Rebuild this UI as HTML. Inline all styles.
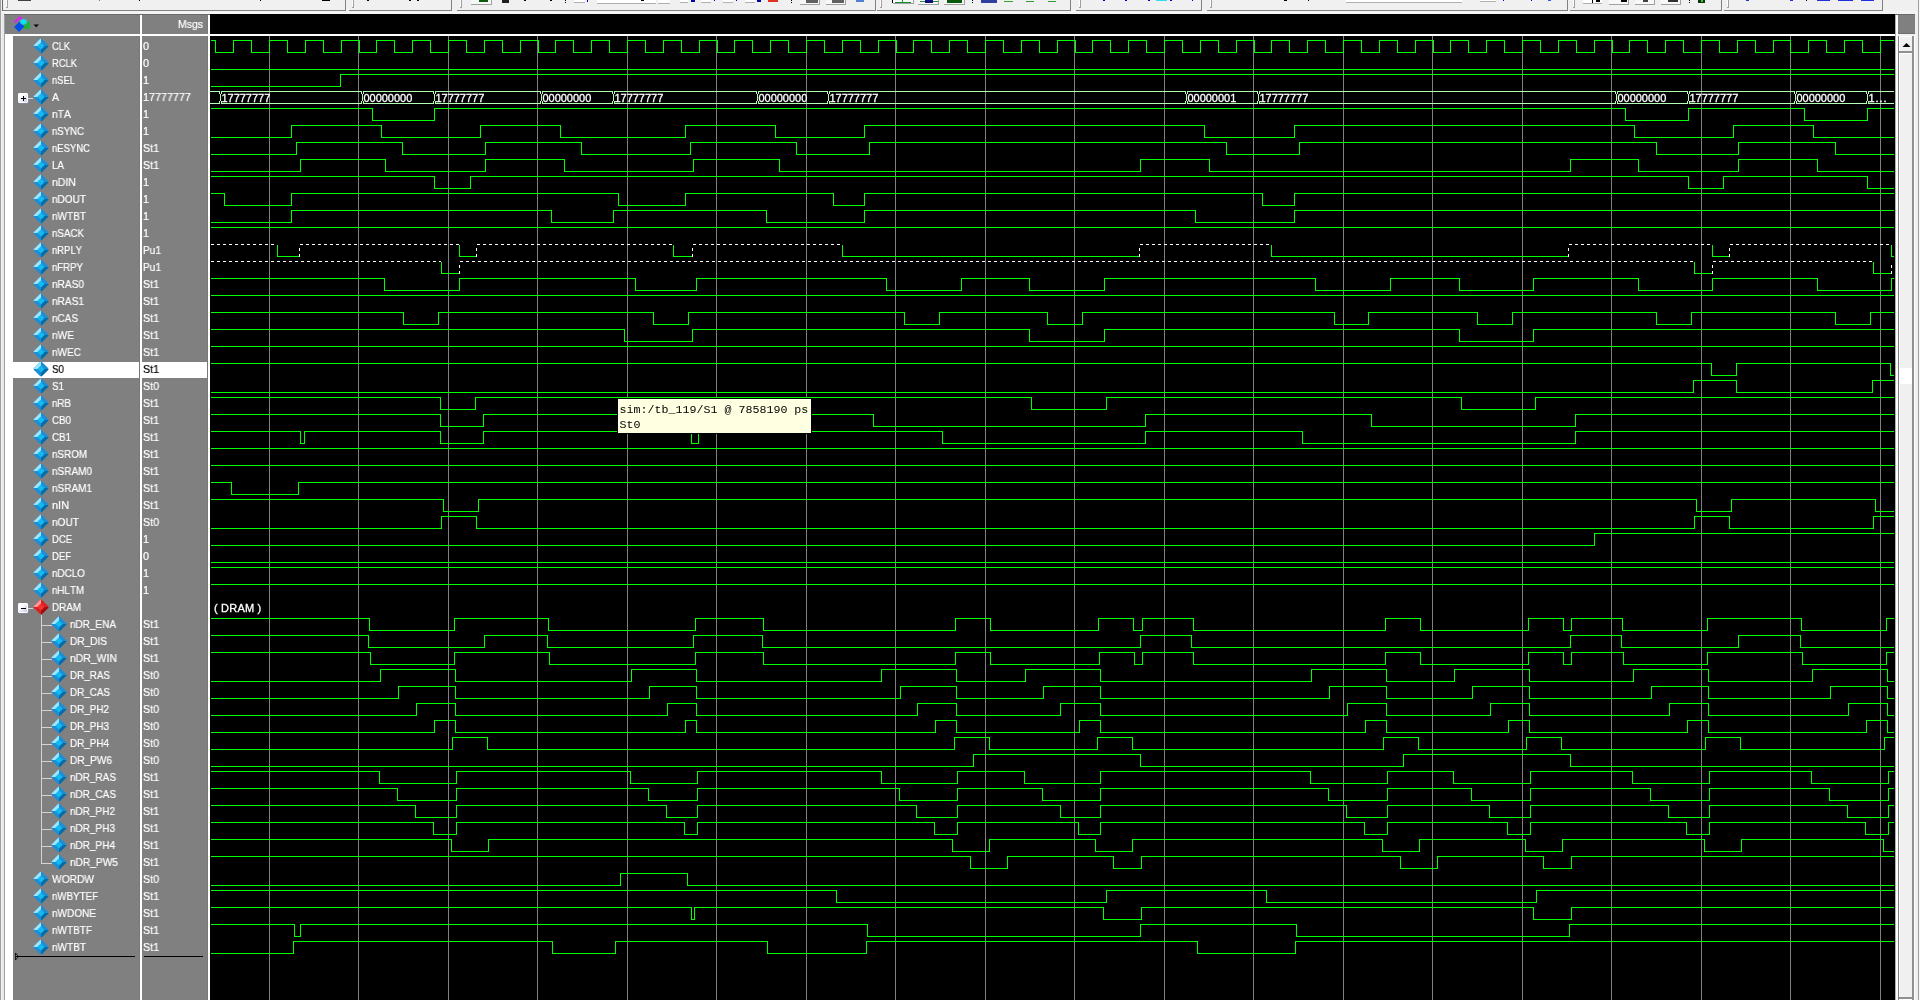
<!DOCTYPE html>
<html><head><meta charset="utf-8"><title>wave</title>
<style>
html,body{margin:0;padding:0}
body{width:1920px;height:1000px;overflow:hidden;position:relative;background:#f0f0f0;font-family:"Liberation Sans",sans-serif;font-size:11px;font-kerning:none}
i,b{display:block;position:absolute;font-style:normal;font-weight:normal}
.abs{position:absolute}
.wave{position:absolute;left:0;top:0;will-change:transform}
.bt{font-family:"Liberation Sans",sans-serif;font-size:11px;fill:#fff;stroke:#fff;stroke-width:.3px}
.nm,.vl{-webkit-text-stroke:.2px;will-change:transform;position:absolute;height:17px;line-height:17px;color:#fff;white-space:nowrap;transform-origin:0 50%;}
.nm{transform:scaleX(0.92)}
.vl{left:143px;transform:scaleX(0.97)}
.nm.sel,.vl.sel{color:#000}
.dm{position:absolute}
.selbg{position:absolute;left:13px;width:126px;height:16px;background:#fff}
.selbg2{position:absolute;left:142px;width:65px;height:16px;background:#fff}
.cl{height:1px;background:#d4d4d4}
.cv{width:1px;background:#d4d4d4}
.pm{width:8px;height:8px;border:1px solid #fff;border-radius:1px;background:linear-gradient(135deg,#ffffff 30%,#c4cce8 100%);box-shadow:0.5px 0.5px 0 #8890b0}
.pm .h{left:1.7px;top:3.5px;width:5px;height:1px;background:#000}
.pm .v{left:3.7px;top:1.5px;width:1px;height:5px;background:#000}
.tip{will-change:transform;position:absolute;left:617px;top:398px;width:193px;height:34px;border:1px solid #000;background:#ffffe1;font-family:"Liberation Mono",monospace;font-size:11.67px;color:#000;line-height:15px;white-space:pre;padding:0;overflow:hidden}
.tip span{position:absolute;left:1.5px}
</style></head><body>


<!-- top toolbar strip -->
<div id="tb">
<i style="left:1661px;top:0;width:19px;height:4px;background:#f8f8f8;border-right:1px solid #a0a0a0;border-bottom:1px solid #a0a0a0"></i>
<i style="left:1635px;top:0;width:19px;height:4px;background:#f8f8f8;border-right:1px solid #a0a0a0;border-bottom:1px solid #a0a0a0"></i>
<i style="left:1609px;top:0;width:19px;height:4px;background:#f8f8f8;border-right:1px solid #a0a0a0;border-bottom:1px solid #a0a0a0"></i>
<i style="left:944px;top:0;width:20px;height:4px;background:#f8f8f8;border-right:1px solid #a0a0a0;border-bottom:1px solid #a0a0a0"></i>
<i style="left:918px;top:0;width:20px;height:4px;background:#f8f8f8;border-right:1px solid #a0a0a0;border-bottom:1px solid #a0a0a0"></i>
<i style="left:893px;top:0;width:20px;height:3px;background:#f8f8f8;border-right:1px solid #a0a0a0;border-bottom:1px solid #a0a0a0"></i>
<i style="left:826px;top:0;width:19px;height:4px;background:#f8f8f8;border-right:1px solid #a0a0a0;border-bottom:1px solid #a0a0a0"></i>
<i style="left:800px;top:0;width:19px;height:4px;background:#f8f8f8;border-right:1px solid #a0a0a0;border-bottom:1px solid #a0a0a0"></i>
<i style="left:471px;top:0;width:20px;height:4px;background:#f8f8f8;border-right:1px solid #a0a0a0;border-bottom:1px solid #a0a0a0"></i>
<i style="left:1480px;top:0;width:16px;height:1px;background:#fff;border-bottom:1px solid #b0b0b0"></i>
<i style="left:1346px;top:0;width:116px;height:2px;background:#fff;border-bottom:1px solid #b0b0b0"></i>
<i style="left:1583px;top:0;width:19px;height:3px;background:#fff;border-bottom:1px solid #b0b0b0"></i>
<i style="left:745px;top:0;width:10px;height:2px;background:#fff;border-bottom:1px solid #b0b0b0"></i>
<i style="left:723px;top:0;width:10px;height:2px;background:#fff;border-bottom:1px solid #b0b0b0"></i>
<i style="left:701px;top:0;width:10px;height:2px;background:#fff;border-bottom:1px solid #b0b0b0"></i>
<i style="left:680px;top:0;width:8px;height:2px;background:#fff;border-bottom:1px solid #b0b0b0"></i>
<i style="left:658px;top:0;width:12px;height:3px;background:#fff;border-bottom:1px solid #b0b0b0"></i>
<i style="left:574px;top:0;width:11px;height:2px;background:#fff;border-bottom:1px solid #b0b0b0"></i>
<i style="left:597px;top:0;width:59px;height:3px;background:#fff;border-bottom:1px solid #b0b0b0"></i>
<i style="left:3px;top:0;width:343px;height:11px;border-right:1px solid #808080;border-bottom:1px solid #808080;box-sizing:border-box"></i>
<i style="left:6px;top:0;width:1px;height:8px;background:#fff"></i><i style="left:7px;top:0;width:1px;height:8px;background:#a0a0a0"></i><i style="left:6px;top:7px;width:2px;height:1px;background:#a0a0a0"></i>
<i style="left:349px;top:0;width:103px;height:11px;border-right:1px solid #808080;border-bottom:1px solid #808080;box-sizing:border-box"></i>
<i style="left:352px;top:0;width:1px;height:8px;background:#fff"></i><i style="left:353px;top:0;width:1px;height:8px;background:#a0a0a0"></i><i style="left:352px;top:7px;width:2px;height:1px;background:#a0a0a0"></i>
<i style="left:457px;top:0;width:419px;height:11px;border-right:1px solid #808080;border-bottom:1px solid #808080;box-sizing:border-box"></i>
<i style="left:460px;top:0;width:1px;height:8px;background:#fff"></i><i style="left:461px;top:0;width:1px;height:8px;background:#a0a0a0"></i><i style="left:460px;top:7px;width:2px;height:1px;background:#a0a0a0"></i>
<i style="left:877px;top:0;width:194px;height:11px;border-right:1px solid #808080;border-bottom:1px solid #808080;box-sizing:border-box"></i>
<i style="left:880px;top:0;width:1px;height:8px;background:#fff"></i><i style="left:881px;top:0;width:1px;height:8px;background:#a0a0a0"></i><i style="left:880px;top:7px;width:2px;height:1px;background:#a0a0a0"></i>
<i style="left:1076px;top:0;width:126px;height:11px;border-right:1px solid #808080;border-bottom:1px solid #808080;box-sizing:border-box"></i>
<i style="left:1079px;top:0;width:1px;height:8px;background:#fff"></i><i style="left:1080px;top:0;width:1px;height:8px;background:#a0a0a0"></i><i style="left:1079px;top:7px;width:2px;height:1px;background:#a0a0a0"></i>
<i style="left:1207px;top:0;width:361px;height:11px;border-right:1px solid #808080;border-bottom:1px solid #808080;box-sizing:border-box"></i>
<i style="left:1210px;top:0;width:1px;height:8px;background:#fff"></i><i style="left:1211px;top:0;width:1px;height:8px;background:#a0a0a0"></i><i style="left:1210px;top:7px;width:2px;height:1px;background:#a0a0a0"></i>
<i style="left:1570px;top:0;width:152px;height:11px;border-right:1px solid #808080;border-bottom:1px solid #808080;box-sizing:border-box"></i>
<i style="left:1573px;top:0;width:1px;height:8px;background:#fff"></i><i style="left:1574px;top:0;width:1px;height:8px;background:#a0a0a0"></i><i style="left:1573px;top:7px;width:2px;height:1px;background:#a0a0a0"></i>
<i style="left:1724px;top:0;width:159px;height:11px;border-right:1px solid #808080;border-bottom:1px solid #808080;box-sizing:border-box"></i>
<i style="left:1727px;top:0;width:1px;height:8px;background:#fff"></i><i style="left:1728px;top:0;width:1px;height:8px;background:#a0a0a0"></i><i style="left:1727px;top:7px;width:2px;height:1px;background:#a0a0a0"></i>
<i style="left:18px;top:0px;width:13px;height:1px;background:#404040"></i>
<i style="left:99px;top:0px;width:1px;height:1px;background:#40a040"></i>
<i style="left:139px;top:0px;width:1px;height:1px;background:#000"></i>
<i style="left:260px;top:0px;width:1px;height:1px;background:#000"></i>
<i style="left:322px;top:0px;width:8px;height:1px;background:#000"></i>
<i style="left:367px;top:0px;width:2px;height:1px;background:#000"></i>
<i style="left:409px;top:0px;width:2px;height:1px;background:#000"></i>
<i style="left:417px;top:0px;width:2px;height:1px;background:#000"></i>
<i style="left:479px;top:0px;width:9px;height:2px;background:#0a5a0a"></i>
<i style="left:502px;top:0px;width:7px;height:3px;background:#202020"></i>
<i style="left:524px;top:0px;width:2px;height:1px;background:#000"></i>
<i style="left:550px;top:0px;width:2px;height:1px;background:#000"></i>
<i style="left:565px;top:0px;width:1px;height:1px;background:#000"></i>
<i style="left:565px;top:2px;width:1px;height:1px;background:#000"></i>
<i style="left:587px;top:0px;width:1px;height:2px;background:#0000c0"></i>
<i style="left:641px;top:0px;width:3px;height:1px;background:#000"></i>
<i style="left:691px;top:0px;width:4px;height:2px;background:#0000a0"></i>
<i style="left:714px;top:0px;width:1px;height:1px;background:#0000c0"></i>
<i style="left:736px;top:0px;width:1px;height:1px;background:#0000c0"></i>
<i style="left:757px;top:0px;width:4px;height:2px;background:#0000a0"></i>
<i style="left:768px;top:0px;width:10px;height:2px;background:#e03020"></i>
<i style="left:791px;top:0px;width:1px;height:1px;background:#000"></i>
<i style="left:791px;top:2px;width:1px;height:1px;background:#000"></i>
<i style="left:806px;top:0px;width:12px;height:3px;background:#606060"></i>
<i style="left:832px;top:0px;width:12px;height:3px;background:#606060"></i>
<i style="left:856px;top:0px;width:8px;height:2px;background:#5080d0"></i>
<i style="left:892px;top:0px;width:1px;height:3px;background:#000"></i>
<i style="left:895px;top:2px;width:16px;height:1px;background:#109030"></i>
<i style="left:902px;top:0px;width:1px;height:2px;background:#109030"></i>
<i style="left:920px;top:1px;width:18px;height:1px;background:#109030"></i>
<i style="left:925px;top:0px;width:8px;height:3px;background:#101080"></i>
<i style="left:947px;top:0px;width:15px;height:3px;background:#0a5a0a"></i>
<i style="left:972px;top:0px;width:1px;height:1px;background:#000"></i>
<i style="left:972px;top:2px;width:1px;height:1px;background:#000"></i>
<i style="left:981px;top:0px;width:16px;height:3px;background:#3040a0"></i>
<i style="left:1004px;top:1px;width:9px;height:1px;background:#30a030"></i>
<i style="left:1026px;top:1px;width:8px;height:1px;background:#30a030"></i>
<i style="left:1048px;top:1px;width:8px;height:1px;background:#30a030"></i>
<i style="left:1103px;top:0px;width:2px;height:1px;background:#0000d0"></i>
<i style="left:1125px;top:0px;width:2px;height:1px;background:#0000d0"></i>
<i style="left:1148px;top:0px;width:2px;height:1px;background:#0000d0"></i>
<i style="left:1156px;top:0px;width:11px;height:1px;background:#30e0f0"></i>
<i style="left:1170px;top:0px;width:2px;height:1px;background:#0000d0"></i>
<i style="left:1192px;top:0px;width:1px;height:1px;background:#0000d0"></i>
<i style="left:1284px;top:0px;width:3px;height:1px;background:#000"></i>
<i style="left:1308px;top:0px;width:1px;height:1px;background:#000"></i>
<i style="left:1503px;top:0px;width:1px;height:1px;background:#0000ff"></i>
<i style="left:1531px;top:0px;width:1px;height:1px;background:#0000ff"></i>
<i style="left:1548px;top:0px;width:3px;height:1px;background:#3060ff"></i>
<i style="left:1592px;top:0px;width:1px;height:3px;background:#000"></i>
<i style="left:1596px;top:0px;width:4px;height:2px;background:#000"></i>
<i style="left:1621px;top:0px;width:6px;height:2px;background:#000"></i>
<i style="left:1643px;top:0px;width:5px;height:2px;background:#404040"></i>
<i style="left:1668px;top:0px;width:10px;height:2px;background:#303030"></i>
<i style="left:1689px;top:0px;width:1px;height:1px;background:#000"></i>
<i style="left:1689px;top:2px;width:1px;height:1px;background:#000"></i>
<i style="left:1698px;top:0px;width:7px;height:3px;background:#103010"></i>
<i style="left:1701px;top:0px;width:2px;height:2px;background:#30d030"></i>
<i style="left:1746px;top:0px;width:3px;height:1px;background:#2030e0"></i>
<i style="left:1790px;top:0px;width:3px;height:1px;background:#2030e0"></i>
<i style="left:1806px;top:0px;width:1px;height:1px;background:#000"></i>
<i style="left:1817px;top:0px;width:13px;height:1px;background:#2030e0"></i>
<i style="left:1838px;top:0px;width:15px;height:1px;background:#2030e0"></i>
<i style="left:1861px;top:0px;width:13px;height:1px;background:#2030e0"></i>
<i style="left:2px;top:10px;width:1px;height:1px;background:#8c8c8c"></i>
</div>

<!-- outer frame left -->
<i style="left:0;top:0;width:1px;height:1000px;background:#a0a0a0"></i>
<i style="left:2px;top:0;width:1px;height:11px;background:#696969"></i>
<i style="left:3px;top:11px;width:1917px;height:3px;background:#f4f4f4"></i>
<i style="left:2px;top:14px;width:3px;height:986px;background:#e8e8e8"></i>
<i style="left:4px;top:14px;width:1px;height:986px;background:#a0a0a0"></i>

<!-- header -->
<i style="left:4px;top:14px;width:206px;height:1px;background:#696969"></i>
<i style="left:5px;top:15px;width:135px;height:19px;background:#808080"></i>
<i style="left:142px;top:15px;width:66px;height:19px;background:#808080"></i>
<i style="left:140px;top:15px;width:2px;height:985px;background:#fff"></i>
<i style="left:139px;top:15px;width:1px;height:985px;background:#787878"></i>
<i style="left:208px;top:15px;width:2px;height:985px;background:#fff"></i>
<i style="left:207px;top:15px;width:1px;height:985px;background:#787878"></i>
<i style="left:5px;top:34px;width:203px;height:2px;background:#fff"></i>
<span class="abs" style="left:178px;top:17px;color:#fff;line-height:14px;transform:scaleX(0.95);transform-origin:0 50%;will-change:transform;-webkit-text-stroke:.2px">Msgs</span>
<svg class="abs" style="left:12px;top:15px" width="30" height="20" viewBox="0 0 30 20">
<polygon points="2,6.5 8,1 11,4 9.5,5.5 8,4 3.5,8" fill="#e020f0"/>
<rect x="12" y="6.5" width="6" height="7.5" fill="#20b040"/>
<polygon points="2,12 7.5,6.5 12.5,11.5 7,17" fill="#0050e8"/>
<ellipse cx="11.5" cy="6.7" rx="3.4" ry="2.7" fill="#00e8f8" stroke="#7098c0" stroke-width="0.6"/>
<polygon points="21.5,9.5 27,9.5 24.2,12.3" fill="#000"/>
</svg>

<!-- names + values bg -->
<i style="left:5px;top:36px;width:8px;height:964px;background:#fff"></i>
<i style="left:13px;top:36px;width:126px;height:964px;background:#808080"></i>
<i style="left:142px;top:36px;width:65px;height:964px;background:#808080"></i>
<div id="rows">
<svg class="dm" style="left:32.5px;top:38.2px" width="16" height="16" viewBox="0 0 16 16"><polygon points="7.3,0.7 8.7,0.7 15.3,7.3 15.3,8.7 8.7,15.3 7.3,15.3 0.7,8.7 0.7,7.3" fill="#1a8fd6"/><polygon points="7.3,0.7 8,0.7 8,4.5 4.5,8 0.7,8 0.7,7.3" fill="#9ee6ff"/><polygon points="8,15.3 8.7,15.3 15.3,8.7 15.3,8 11.5,8 8,11.5" fill="#0a6aa6"/><polygon points="8,4.5 11.5,8 8,11.5 4.5,8" fill="#12baf2"/></svg><span class="nm " style="left:52px;top:38px;transform:scaleX(0.8412)">CLK</span><span class="vl " style="top:38px;transform:scaleX(0.9807)">0</span>
<svg class="dm" style="left:32.5px;top:55.2px" width="16" height="16" viewBox="0 0 16 16"><polygon points="7.3,0.7 8.7,0.7 15.3,7.3 15.3,8.7 8.7,15.3 7.3,15.3 0.7,8.7 0.7,7.3" fill="#1a8fd6"/><polygon points="7.3,0.7 8,0.7 8,4.5 4.5,8 0.7,8 0.7,7.3" fill="#9ee6ff"/><polygon points="8,15.3 8.7,15.3 15.3,8.7 15.3,8 11.5,8 8,11.5" fill="#0a6aa6"/><polygon points="8,4.5 11.5,8 8,11.5 4.5,8" fill="#12baf2"/></svg><span class="nm " style="left:52px;top:55px;transform:scaleX(0.852)">RCLK</span><span class="vl " style="top:55px;transform:scaleX(0.9807)">0</span>
<svg class="dm" style="left:32.5px;top:72.2px" width="16" height="16" viewBox="0 0 16 16"><polygon points="7.3,0.7 8.7,0.7 15.3,7.3 15.3,8.7 8.7,15.3 7.3,15.3 0.7,8.7 0.7,7.3" fill="#1a8fd6"/><polygon points="7.3,0.7 8,0.7 8,4.5 4.5,8 0.7,8 0.7,7.3" fill="#9ee6ff"/><polygon points="8,15.3 8.7,15.3 15.3,8.7 15.3,8 11.5,8 8,11.5" fill="#0a6aa6"/><polygon points="8,4.5 11.5,8 8,11.5 4.5,8" fill="#12baf2"/></svg><span class="nm " style="left:52px;top:72px;transform:scaleX(0.8547)">nSEL</span><span class="vl " style="top:72px;transform:scaleX(0.9807)">1</span>
<i class="pm" style="left:18px;top:93px"><b class="h"></b><b class="v"></b></i><i class="cl" style="left:28px;top:98px;width:5px"></i><svg class="dm" style="left:32.5px;top:89.2px" width="16" height="16" viewBox="0 0 16 16"><polygon points="7.3,0.7 8.7,0.7 15.3,7.3 15.3,8.7 8.7,15.3 7.3,15.3 0.7,8.7 0.7,7.3" fill="#1a8fd6"/><polygon points="7.3,0.7 8,0.7 8,4.5 4.5,8 0.7,8 0.7,7.3" fill="#9ee6ff"/><polygon points="8,15.3 8.7,15.3 15.3,8.7 15.3,8 11.5,8 8,11.5" fill="#0a6aa6"/><polygon points="8,4.5 11.5,8 8,11.5 4.5,8" fill="#12baf2"/></svg><span class="nm " style="left:52px;top:89px;transform:scaleX(0.9541)">A</span><span class="vl " style="top:89px;transform:scaleX(0.9807)">17777777</span>
<svg class="dm" style="left:32.5px;top:106.2px" width="16" height="16" viewBox="0 0 16 16"><polygon points="7.3,0.7 8.7,0.7 15.3,7.3 15.3,8.7 8.7,15.3 7.3,15.3 0.7,8.7 0.7,7.3" fill="#1a8fd6"/><polygon points="7.3,0.7 8,0.7 8,4.5 4.5,8 0.7,8 0.7,7.3" fill="#9ee6ff"/><polygon points="8,15.3 8.7,15.3 15.3,8.7 15.3,8 11.5,8 8,11.5" fill="#0a6aa6"/><polygon points="8,4.5 11.5,8 8,11.5 4.5,8" fill="#12baf2"/></svg><span class="nm " style="left:52px;top:106px;transform:scaleX(0.9418)">nTA</span><span class="vl " style="top:106px;transform:scaleX(0.9807)">1</span>
<svg class="dm" style="left:32.5px;top:123.2px" width="16" height="16" viewBox="0 0 16 16"><polygon points="7.3,0.7 8.7,0.7 15.3,7.3 15.3,8.7 8.7,15.3 7.3,15.3 0.7,8.7 0.7,7.3" fill="#1a8fd6"/><polygon points="7.3,0.7 8,0.7 8,4.5 4.5,8 0.7,8 0.7,7.3" fill="#9ee6ff"/><polygon points="8,15.3 8.7,15.3 15.3,8.7 15.3,8 11.5,8 8,11.5" fill="#0a6aa6"/><polygon points="8,4.5 11.5,8 8,11.5 4.5,8" fill="#12baf2"/></svg><span class="nm " style="left:52px;top:123px;transform:scaleX(0.8724)">nSYNC</span><span class="vl " style="top:123px;transform:scaleX(0.9807)">1</span>
<svg class="dm" style="left:32.5px;top:140.2px" width="16" height="16" viewBox="0 0 16 16"><polygon points="7.3,0.7 8.7,0.7 15.3,7.3 15.3,8.7 8.7,15.3 7.3,15.3 0.7,8.7 0.7,7.3" fill="#1a8fd6"/><polygon points="7.3,0.7 8,0.7 8,4.5 4.5,8 0.7,8 0.7,7.3" fill="#9ee6ff"/><polygon points="8,15.3 8.7,15.3 15.3,8.7 15.3,8 11.5,8 8,11.5" fill="#0a6aa6"/><polygon points="8,4.5 11.5,8 8,11.5 4.5,8" fill="#12baf2"/></svg><span class="nm " style="left:52px;top:140px;transform:scaleX(0.8633)">nESYNC</span><span class="vl " style="top:140px;transform:scaleX(0.9691)">St1</span>
<svg class="dm" style="left:32.5px;top:157.2px" width="16" height="16" viewBox="0 0 16 16"><polygon points="7.3,0.7 8.7,0.7 15.3,7.3 15.3,8.7 8.7,15.3 7.3,15.3 0.7,8.7 0.7,7.3" fill="#1a8fd6"/><polygon points="7.3,0.7 8,0.7 8,4.5 4.5,8 0.7,8 0.7,7.3" fill="#9ee6ff"/><polygon points="8,15.3 8.7,15.3 15.3,8.7 15.3,8 11.5,8 8,11.5" fill="#0a6aa6"/><polygon points="8,4.5 11.5,8 8,11.5 4.5,8" fill="#12baf2"/></svg><span class="nm " style="left:52px;top:157px;transform:scaleX(0.8919)">LA</span><span class="vl " style="top:157px;transform:scaleX(0.9691)">St1</span>
<svg class="dm" style="left:32.5px;top:174.2px" width="16" height="16" viewBox="0 0 16 16"><polygon points="7.3,0.7 8.7,0.7 15.3,7.3 15.3,8.7 8.7,15.3 7.3,15.3 0.7,8.7 0.7,7.3" fill="#1a8fd6"/><polygon points="7.3,0.7 8,0.7 8,4.5 4.5,8 0.7,8 0.7,7.3" fill="#9ee6ff"/><polygon points="8,15.3 8.7,15.3 15.3,8.7 15.3,8 11.5,8 8,11.5" fill="#0a6aa6"/><polygon points="8,4.5 11.5,8 8,11.5 4.5,8" fill="#12baf2"/></svg><span class="nm " style="left:52px;top:174px;transform:scaleX(0.9576)">nDIN</span><span class="vl " style="top:174px;transform:scaleX(0.9807)">1</span>
<svg class="dm" style="left:32.5px;top:191.2px" width="16" height="16" viewBox="0 0 16 16"><polygon points="7.3,0.7 8.7,0.7 15.3,7.3 15.3,8.7 8.7,15.3 7.3,15.3 0.7,8.7 0.7,7.3" fill="#1a8fd6"/><polygon points="7.3,0.7 8,0.7 8,4.5 4.5,8 0.7,8 0.7,7.3" fill="#9ee6ff"/><polygon points="8,15.3 8.7,15.3 15.3,8.7 15.3,8 11.5,8 8,11.5" fill="#0a6aa6"/><polygon points="8,4.5 11.5,8 8,11.5 4.5,8" fill="#12baf2"/></svg><span class="nm " style="left:52px;top:191px;transform:scaleX(0.912)">nDOUT</span><span class="vl " style="top:191px;transform:scaleX(0.9807)">1</span>
<svg class="dm" style="left:32.5px;top:208.2px" width="16" height="16" viewBox="0 0 16 16"><polygon points="7.3,0.7 8.7,0.7 15.3,7.3 15.3,8.7 8.7,15.3 7.3,15.3 0.7,8.7 0.7,7.3" fill="#1a8fd6"/><polygon points="7.3,0.7 8,0.7 8,4.5 4.5,8 0.7,8 0.7,7.3" fill="#9ee6ff"/><polygon points="8,15.3 8.7,15.3 15.3,8.7 15.3,8 11.5,8 8,11.5" fill="#0a6aa6"/><polygon points="8,4.5 11.5,8 8,11.5 4.5,8" fill="#12baf2"/></svg><span class="nm " style="left:52px;top:208px;transform:scaleX(0.9121)">nWTBT</span><span class="vl " style="top:208px;transform:scaleX(0.9807)">1</span>
<svg class="dm" style="left:32.5px;top:225.2px" width="16" height="16" viewBox="0 0 16 16"><polygon points="7.3,0.7 8.7,0.7 15.3,7.3 15.3,8.7 8.7,15.3 7.3,15.3 0.7,8.7 0.7,7.3" fill="#1a8fd6"/><polygon points="7.3,0.7 8,0.7 8,4.5 4.5,8 0.7,8 0.7,7.3" fill="#9ee6ff"/><polygon points="8,15.3 8.7,15.3 15.3,8.7 15.3,8 11.5,8 8,11.5" fill="#0a6aa6"/><polygon points="8,4.5 11.5,8 8,11.5 4.5,8" fill="#12baf2"/></svg><span class="nm " style="left:52px;top:225px;transform:scaleX(0.8871)">nSACK</span><span class="vl " style="top:225px;transform:scaleX(0.9807)">1</span>
<svg class="dm" style="left:32.5px;top:242.2px" width="16" height="16" viewBox="0 0 16 16"><polygon points="7.3,0.7 8.7,0.7 15.3,7.3 15.3,8.7 8.7,15.3 7.3,15.3 0.7,8.7 0.7,7.3" fill="#1a8fd6"/><polygon points="7.3,0.7 8,0.7 8,4.5 4.5,8 0.7,8 0.7,7.3" fill="#9ee6ff"/><polygon points="8,15.3 8.7,15.3 15.3,8.7 15.3,8 11.5,8 8,11.5" fill="#0a6aa6"/><polygon points="8,4.5 11.5,8 8,11.5 4.5,8" fill="#12baf2"/></svg><span class="nm " style="left:52px;top:242px;transform:scaleX(0.8608)">nRPLY</span><span class="vl " style="top:242px;transform:scaleX(0.9197)">Pu1</span>
<svg class="dm" style="left:32.5px;top:259.2px" width="16" height="16" viewBox="0 0 16 16"><polygon points="7.3,0.7 8.7,0.7 15.3,7.3 15.3,8.7 8.7,15.3 7.3,15.3 0.7,8.7 0.7,7.3" fill="#1a8fd6"/><polygon points="7.3,0.7 8,0.7 8,4.5 4.5,8 0.7,8 0.7,7.3" fill="#9ee6ff"/><polygon points="8,15.3 8.7,15.3 15.3,8.7 15.3,8 11.5,8 8,11.5" fill="#0a6aa6"/><polygon points="8,4.5 11.5,8 8,11.5 4.5,8" fill="#12baf2"/></svg><span class="nm " style="left:52px;top:259px;transform:scaleX(0.8744)">nFRPY</span><span class="vl " style="top:259px;transform:scaleX(0.9197)">Pu1</span>
<svg class="dm" style="left:32.5px;top:276.2px" width="16" height="16" viewBox="0 0 16 16"><polygon points="7.3,0.7 8.7,0.7 15.3,7.3 15.3,8.7 8.7,15.3 7.3,15.3 0.7,8.7 0.7,7.3" fill="#1a8fd6"/><polygon points="7.3,0.7 8,0.7 8,4.5 4.5,8 0.7,8 0.7,7.3" fill="#9ee6ff"/><polygon points="8,15.3 8.7,15.3 15.3,8.7 15.3,8 11.5,8 8,11.5" fill="#0a6aa6"/><polygon points="8,4.5 11.5,8 8,11.5 4.5,8" fill="#12baf2"/></svg><span class="nm " style="left:52px;top:276px;transform:scaleX(0.9181)">nRAS0</span><span class="vl " style="top:276px;transform:scaleX(0.9691)">St1</span>
<svg class="dm" style="left:32.5px;top:293.2px" width="16" height="16" viewBox="0 0 16 16"><polygon points="7.3,0.7 8.7,0.7 15.3,7.3 15.3,8.7 8.7,15.3 7.3,15.3 0.7,8.7 0.7,7.3" fill="#1a8fd6"/><polygon points="7.3,0.7 8,0.7 8,4.5 4.5,8 0.7,8 0.7,7.3" fill="#9ee6ff"/><polygon points="8,15.3 8.7,15.3 15.3,8.7 15.3,8 11.5,8 8,11.5" fill="#0a6aa6"/><polygon points="8,4.5 11.5,8 8,11.5 4.5,8" fill="#12baf2"/></svg><span class="nm " style="left:52px;top:293px;transform:scaleX(0.9181)">nRAS1</span><span class="vl " style="top:293px;transform:scaleX(0.9691)">St1</span>
<svg class="dm" style="left:32.5px;top:310.2px" width="16" height="16" viewBox="0 0 16 16"><polygon points="7.3,0.7 8.7,0.7 15.3,7.3 15.3,8.7 8.7,15.3 7.3,15.3 0.7,8.7 0.7,7.3" fill="#1a8fd6"/><polygon points="7.3,0.7 8,0.7 8,4.5 4.5,8 0.7,8 0.7,7.3" fill="#9ee6ff"/><polygon points="8,15.3 8.7,15.3 15.3,8.7 15.3,8 11.5,8 8,11.5" fill="#0a6aa6"/><polygon points="8,4.5 11.5,8 8,11.5 4.5,8" fill="#12baf2"/></svg><span class="nm " style="left:52px;top:310px;transform:scaleX(0.9048)">nCAS</span><span class="vl " style="top:310px;transform:scaleX(0.9691)">St1</span>
<svg class="dm" style="left:32.5px;top:327.2px" width="16" height="16" viewBox="0 0 16 16"><polygon points="7.3,0.7 8.7,0.7 15.3,7.3 15.3,8.7 8.7,15.3 7.3,15.3 0.7,8.7 0.7,7.3" fill="#1a8fd6"/><polygon points="7.3,0.7 8,0.7 8,4.5 4.5,8 0.7,8 0.7,7.3" fill="#9ee6ff"/><polygon points="8,15.3 8.7,15.3 15.3,8.7 15.3,8 11.5,8 8,11.5" fill="#0a6aa6"/><polygon points="8,4.5 11.5,8 8,11.5 4.5,8" fill="#12baf2"/></svg><span class="nm " style="left:52px;top:327px;transform:scaleX(0.9229)">nWE</span><span class="vl " style="top:327px;transform:scaleX(0.9691)">St1</span>
<svg class="dm" style="left:32.5px;top:344.2px" width="16" height="16" viewBox="0 0 16 16"><polygon points="7.3,0.7 8.7,0.7 15.3,7.3 15.3,8.7 8.7,15.3 7.3,15.3 0.7,8.7 0.7,7.3" fill="#1a8fd6"/><polygon points="7.3,0.7 8,0.7 8,4.5 4.5,8 0.7,8 0.7,7.3" fill="#9ee6ff"/><polygon points="8,15.3 8.7,15.3 15.3,8.7 15.3,8 11.5,8 8,11.5" fill="#0a6aa6"/><polygon points="8,4.5 11.5,8 8,11.5 4.5,8" fill="#12baf2"/></svg><span class="nm " style="left:52px;top:344px;transform:scaleX(0.9125)">nWEC</span><span class="vl " style="top:344px;transform:scaleX(0.9691)">St1</span>
<div class="selbg" style="top:362px"></div><div class="selbg2" style="top:362px"></div>
<svg class="dm" style="left:32.5px;top:361.2px" width="16" height="16" viewBox="0 0 16 16"><polygon points="7.3,0.7 8.7,0.7 15.3,7.3 15.3,8.7 8.7,15.3 7.3,15.3 0.7,8.7 0.7,7.3" fill="#1a8fd6"/><polygon points="7.3,0.7 8,0.7 8,4.5 4.5,8 0.7,8 0.7,7.3" fill="#9ee6ff"/><polygon points="8,15.3 8.7,15.3 15.3,8.7 15.3,8 11.5,8 8,11.5" fill="#0a6aa6"/><polygon points="8,4.5 11.5,8 8,11.5 4.5,8" fill="#12baf2"/></svg><span class="nm sel" style="left:52px;top:361px;transform:scaleX(0.8919)">S0</span><span class="vl sel" style="top:361px;transform:scaleX(0.9691)">St1</span>
<svg class="dm" style="left:32.5px;top:378.2px" width="16" height="16" viewBox="0 0 16 16"><polygon points="7.3,0.7 8.7,0.7 15.3,7.3 15.3,8.7 8.7,15.3 7.3,15.3 0.7,8.7 0.7,7.3" fill="#1a8fd6"/><polygon points="7.3,0.7 8,0.7 8,4.5 4.5,8 0.7,8 0.7,7.3" fill="#9ee6ff"/><polygon points="8,15.3 8.7,15.3 15.3,8.7 15.3,8 11.5,8 8,11.5" fill="#0a6aa6"/><polygon points="8,4.5 11.5,8 8,11.5 4.5,8" fill="#12baf2"/></svg><span class="nm " style="left:52px;top:378px;transform:scaleX(0.8919)">S1</span><span class="vl " style="top:378px;transform:scaleX(0.9691)">St0</span>
<svg class="dm" style="left:32.5px;top:395.2px" width="16" height="16" viewBox="0 0 16 16"><polygon points="7.3,0.7 8.7,0.7 15.3,7.3 15.3,8.7 8.7,15.3 7.3,15.3 0.7,8.7 0.7,7.3" fill="#1a8fd6"/><polygon points="7.3,0.7 8,0.7 8,4.5 4.5,8 0.7,8 0.7,7.3" fill="#9ee6ff"/><polygon points="8,15.3 8.7,15.3 15.3,8.7 15.3,8 11.5,8 8,11.5" fill="#0a6aa6"/><polygon points="8,4.5 11.5,8 8,11.5 4.5,8" fill="#12baf2"/></svg><span class="nm " style="left:52px;top:395px;transform:scaleX(0.8879)">nRB</span><span class="vl " style="top:395px;transform:scaleX(0.9691)">St1</span>
<svg class="dm" style="left:32.5px;top:412.2px" width="16" height="16" viewBox="0 0 16 16"><polygon points="7.3,0.7 8.7,0.7 15.3,7.3 15.3,8.7 8.7,15.3 7.3,15.3 0.7,8.7 0.7,7.3" fill="#1a8fd6"/><polygon points="7.3,0.7 8,0.7 8,4.5 4.5,8 0.7,8 0.7,7.3" fill="#9ee6ff"/><polygon points="8,15.3 8.7,15.3 15.3,8.7 15.3,8 11.5,8 8,11.5" fill="#0a6aa6"/><polygon points="8,4.5 11.5,8 8,11.5 4.5,8" fill="#12baf2"/></svg><span class="nm " style="left:52px;top:412px;transform:scaleX(0.8879)">CB0</span><span class="vl " style="top:412px;transform:scaleX(0.9691)">St1</span>
<svg class="dm" style="left:32.5px;top:429.2px" width="16" height="16" viewBox="0 0 16 16"><polygon points="7.3,0.7 8.7,0.7 15.3,7.3 15.3,8.7 8.7,15.3 7.3,15.3 0.7,8.7 0.7,7.3" fill="#1a8fd6"/><polygon points="7.3,0.7 8,0.7 8,4.5 4.5,8 0.7,8 0.7,7.3" fill="#9ee6ff"/><polygon points="8,15.3 8.7,15.3 15.3,8.7 15.3,8 11.5,8 8,11.5" fill="#0a6aa6"/><polygon points="8,4.5 11.5,8 8,11.5 4.5,8" fill="#12baf2"/></svg><span class="nm " style="left:52px;top:429px;transform:scaleX(0.8879)">CB1</span><span class="vl " style="top:429px;transform:scaleX(0.9691)">St1</span>
<svg class="dm" style="left:32.5px;top:446.2px" width="16" height="16" viewBox="0 0 16 16"><polygon points="7.3,0.7 8.7,0.7 15.3,7.3 15.3,8.7 8.7,15.3 7.3,15.3 0.7,8.7 0.7,7.3" fill="#1a8fd6"/><polygon points="7.3,0.7 8,0.7 8,4.5 4.5,8 0.7,8 0.7,7.3" fill="#9ee6ff"/><polygon points="8,15.3 8.7,15.3 15.3,8.7 15.3,8 11.5,8 8,11.5" fill="#0a6aa6"/><polygon points="8,4.5 11.5,8 8,11.5 4.5,8" fill="#12baf2"/></svg><span class="nm " style="left:52px;top:446px;transform:scaleX(0.8947)">nSROM</span><span class="vl " style="top:446px;transform:scaleX(0.9691)">St1</span>
<svg class="dm" style="left:32.5px;top:463.2px" width="16" height="16" viewBox="0 0 16 16"><polygon points="7.3,0.7 8.7,0.7 15.3,7.3 15.3,8.7 8.7,15.3 7.3,15.3 0.7,8.7 0.7,7.3" fill="#1a8fd6"/><polygon points="7.3,0.7 8,0.7 8,4.5 4.5,8 0.7,8 0.7,7.3" fill="#9ee6ff"/><polygon points="8,15.3 8.7,15.3 15.3,8.7 15.3,8 11.5,8 8,11.5" fill="#0a6aa6"/><polygon points="8,4.5 11.5,8 8,11.5 4.5,8" fill="#12baf2"/></svg><span class="nm " style="left:52px;top:463px;transform:scaleX(0.9088)">nSRAM0</span><span class="vl " style="top:463px;transform:scaleX(0.9691)">St1</span>
<svg class="dm" style="left:32.5px;top:480.2px" width="16" height="16" viewBox="0 0 16 16"><polygon points="7.3,0.7 8.7,0.7 15.3,7.3 15.3,8.7 8.7,15.3 7.3,15.3 0.7,8.7 0.7,7.3" fill="#1a8fd6"/><polygon points="7.3,0.7 8,0.7 8,4.5 4.5,8 0.7,8 0.7,7.3" fill="#9ee6ff"/><polygon points="8,15.3 8.7,15.3 15.3,8.7 15.3,8 11.5,8 8,11.5" fill="#0a6aa6"/><polygon points="8,4.5 11.5,8 8,11.5 4.5,8" fill="#12baf2"/></svg><span class="nm " style="left:52px;top:480px;transform:scaleX(0.9088)">nSRAM1</span><span class="vl " style="top:480px;transform:scaleX(0.9691)">St1</span>
<svg class="dm" style="left:32.5px;top:497.2px" width="16" height="16" viewBox="0 0 16 16"><polygon points="7.3,0.7 8.7,0.7 15.3,7.3 15.3,8.7 8.7,15.3 7.3,15.3 0.7,8.7 0.7,7.3" fill="#1a8fd6"/><polygon points="7.3,0.7 8,0.7 8,4.5 4.5,8 0.7,8 0.7,7.3" fill="#9ee6ff"/><polygon points="8,15.3 8.7,15.3 15.3,8.7 15.3,8 11.5,8 8,11.5" fill="#0a6aa6"/><polygon points="8,4.5 11.5,8 8,11.5 4.5,8" fill="#12baf2"/></svg><span class="nm " style="left:52px;top:497px;transform:scaleX(0.9931)">nIN</span><span class="vl " style="top:497px;transform:scaleX(0.9691)">St1</span>
<svg class="dm" style="left:32.5px;top:514.2px" width="16" height="16" viewBox="0 0 16 16"><polygon points="7.3,0.7 8.7,0.7 15.3,7.3 15.3,8.7 8.7,15.3 7.3,15.3 0.7,8.7 0.7,7.3" fill="#1a8fd6"/><polygon points="7.3,0.7 8,0.7 8,4.5 4.5,8 0.7,8 0.7,7.3" fill="#9ee6ff"/><polygon points="8,15.3 8.7,15.3 15.3,8.7 15.3,8 11.5,8 8,11.5" fill="#0a6aa6"/><polygon points="8,4.5 11.5,8 8,11.5 4.5,8" fill="#12baf2"/></svg><span class="nm " style="left:52px;top:514px;transform:scaleX(0.9203)">nOUT</span><span class="vl " style="top:514px;transform:scaleX(0.9691)">St0</span>
<svg class="dm" style="left:32.5px;top:531.2px" width="16" height="16" viewBox="0 0 16 16"><polygon points="7.3,0.7 8.7,0.7 15.3,7.3 15.3,8.7 8.7,15.3 7.3,15.3 0.7,8.7 0.7,7.3" fill="#1a8fd6"/><polygon points="7.3,0.7 8,0.7 8,4.5 4.5,8 0.7,8 0.7,7.3" fill="#9ee6ff"/><polygon points="8,15.3 8.7,15.3 15.3,8.7 15.3,8 11.5,8 8,11.5" fill="#0a6aa6"/><polygon points="8,4.5 11.5,8 8,11.5 4.5,8" fill="#12baf2"/></svg><span class="nm " style="left:52px;top:531px;transform:scaleX(0.8612)">DCE</span><span class="vl " style="top:531px;transform:scaleX(0.9807)">1</span>
<svg class="dm" style="left:32.5px;top:548.2px" width="16" height="16" viewBox="0 0 16 16"><polygon points="7.3,0.7 8.7,0.7 15.3,7.3 15.3,8.7 8.7,15.3 7.3,15.3 0.7,8.7 0.7,7.3" fill="#1a8fd6"/><polygon points="7.3,0.7 8,0.7 8,4.5 4.5,8 0.7,8 0.7,7.3" fill="#9ee6ff"/><polygon points="8,15.3 8.7,15.3 15.3,8.7 15.3,8 11.5,8 8,11.5" fill="#0a6aa6"/><polygon points="8,4.5 11.5,8 8,11.5 4.5,8" fill="#12baf2"/></svg><span class="nm " style="left:52px;top:548px;transform:scaleX(0.8636)">DEF</span><span class="vl " style="top:548px;transform:scaleX(0.9807)">0</span>
<svg class="dm" style="left:32.5px;top:565.2px" width="16" height="16" viewBox="0 0 16 16"><polygon points="7.3,0.7 8.7,0.7 15.3,7.3 15.3,8.7 8.7,15.3 7.3,15.3 0.7,8.7 0.7,7.3" fill="#1a8fd6"/><polygon points="7.3,0.7 8,0.7 8,4.5 4.5,8 0.7,8 0.7,7.3" fill="#9ee6ff"/><polygon points="8,15.3 8.7,15.3 15.3,8.7 15.3,8 11.5,8 8,11.5" fill="#0a6aa6"/><polygon points="8,4.5 11.5,8 8,11.5 4.5,8" fill="#12baf2"/></svg><span class="nm " style="left:52px;top:565px;transform:scaleX(0.8997)">nDCLO</span><span class="vl " style="top:565px;transform:scaleX(0.9807)">1</span>
<svg class="dm" style="left:32.5px;top:582.2px" width="16" height="16" viewBox="0 0 16 16"><polygon points="7.3,0.7 8.7,0.7 15.3,7.3 15.3,8.7 8.7,15.3 7.3,15.3 0.7,8.7 0.7,7.3" fill="#1a8fd6"/><polygon points="7.3,0.7 8,0.7 8,4.5 4.5,8 0.7,8 0.7,7.3" fill="#9ee6ff"/><polygon points="8,15.3 8.7,15.3 15.3,8.7 15.3,8 11.5,8 8,11.5" fill="#0a6aa6"/><polygon points="8,4.5 11.5,8 8,11.5 4.5,8" fill="#12baf2"/></svg><span class="nm " style="left:52px;top:582px;transform:scaleX(0.8873)">nHLTM</span><span class="vl " style="top:582px;transform:scaleX(0.9807)">1</span>
<i class="pm" style="left:18px;top:603px"><b class="h"></b></i><i class="cl" style="left:28px;top:608px;width:5px"></i><svg class="dm" style="left:32.5px;top:599.2px" width="16" height="16" viewBox="0 0 16 16"><polygon points="7.3,0.7 8.7,0.7 15.3,7.3 15.3,8.7 8.7,15.3 7.3,15.3 0.7,8.7 0.7,7.3" fill="#d82020"/><polygon points="7.3,0.7 8,0.7 8,4.5 4.5,8 0.7,8 0.7,7.3" fill="#ff9a9a"/><polygon points="8,15.3 8.7,15.3 15.3,8.7 15.3,8 11.5,8 8,11.5" fill="#a00c0c"/><polygon points="8,4.5 11.5,8 8,11.5 4.5,8" fill="#f43030"/></svg><span class="nm " style="left:52px;top:599px;transform:scaleX(0.8954)">DRAM</span><span class="vl " style="top:599px;transform:scaleX(1)"></span>
<i class="cl" style="left:42px;top:625px;width:10px"></i><svg class="dm" style="left:50.5px;top:616.2px" width="16" height="16" viewBox="0 0 16 16"><polygon points="7.3,0.7 8.7,0.7 15.3,7.3 15.3,8.7 8.7,15.3 7.3,15.3 0.7,8.7 0.7,7.3" fill="#1a8fd6"/><polygon points="7.3,0.7 8,0.7 8,4.5 4.5,8 0.7,8 0.7,7.3" fill="#9ee6ff"/><polygon points="8,15.3 8.7,15.3 15.3,8.7 15.3,8 11.5,8 8,11.5" fill="#0a6aa6"/><polygon points="8,4.5 11.5,8 8,11.5 4.5,8" fill="#12baf2"/></svg><span class="nm " style="left:70px;top:616px;transform:scaleX(0.9066)">nDR_ENA</span><span class="vl " style="top:616px;transform:scaleX(0.9691)">St1</span>
<i class="cl" style="left:42px;top:642px;width:10px"></i><svg class="dm" style="left:50.5px;top:633.2px" width="16" height="16" viewBox="0 0 16 16"><polygon points="7.3,0.7 8.7,0.7 15.3,7.3 15.3,8.7 8.7,15.3 7.3,15.3 0.7,8.7 0.7,7.3" fill="#1a8fd6"/><polygon points="7.3,0.7 8,0.7 8,4.5 4.5,8 0.7,8 0.7,7.3" fill="#9ee6ff"/><polygon points="8,15.3 8.7,15.3 15.3,8.7 15.3,8 11.5,8 8,11.5" fill="#0a6aa6"/><polygon points="8,4.5 11.5,8 8,11.5 4.5,8" fill="#12baf2"/></svg><span class="nm " style="left:70px;top:633px;transform:scaleX(0.9172)">DR_DIS</span><span class="vl " style="top:633px;transform:scaleX(0.9691)">St1</span>
<i class="cl" style="left:42px;top:659px;width:10px"></i><svg class="dm" style="left:50.5px;top:650.2px" width="16" height="16" viewBox="0 0 16 16"><polygon points="7.3,0.7 8.7,0.7 15.3,7.3 15.3,8.7 8.7,15.3 7.3,15.3 0.7,8.7 0.7,7.3" fill="#1a8fd6"/><polygon points="7.3,0.7 8,0.7 8,4.5 4.5,8 0.7,8 0.7,7.3" fill="#9ee6ff"/><polygon points="8,15.3 8.7,15.3 15.3,8.7 15.3,8 11.5,8 8,11.5" fill="#0a6aa6"/><polygon points="8,4.5 11.5,8 8,11.5 4.5,8" fill="#12baf2"/></svg><span class="nm " style="left:70px;top:650px;transform:scaleX(0.9494)">nDR_WIN</span><span class="vl " style="top:650px;transform:scaleX(0.9691)">St1</span>
<i class="cl" style="left:42px;top:676px;width:10px"></i><svg class="dm" style="left:50.5px;top:667.2px" width="16" height="16" viewBox="0 0 16 16"><polygon points="7.3,0.7 8.7,0.7 15.3,7.3 15.3,8.7 8.7,15.3 7.3,15.3 0.7,8.7 0.7,7.3" fill="#1a8fd6"/><polygon points="7.3,0.7 8,0.7 8,4.5 4.5,8 0.7,8 0.7,7.3" fill="#9ee6ff"/><polygon points="8,15.3 8.7,15.3 15.3,8.7 15.3,8 11.5,8 8,11.5" fill="#0a6aa6"/><polygon points="8,4.5 11.5,8 8,11.5 4.5,8" fill="#12baf2"/></svg><span class="nm " style="left:70px;top:667px;transform:scaleX(0.8964)">DR_RAS</span><span class="vl " style="top:667px;transform:scaleX(0.9691)">St0</span>
<i class="cl" style="left:42px;top:693px;width:10px"></i><svg class="dm" style="left:50.5px;top:684.2px" width="16" height="16" viewBox="0 0 16 16"><polygon points="7.3,0.7 8.7,0.7 15.3,7.3 15.3,8.7 8.7,15.3 7.3,15.3 0.7,8.7 0.7,7.3" fill="#1a8fd6"/><polygon points="7.3,0.7 8,0.7 8,4.5 4.5,8 0.7,8 0.7,7.3" fill="#9ee6ff"/><polygon points="8,15.3 8.7,15.3 15.3,8.7 15.3,8 11.5,8 8,11.5" fill="#0a6aa6"/><polygon points="8,4.5 11.5,8 8,11.5 4.5,8" fill="#12baf2"/></svg><span class="nm " style="left:70px;top:684px;transform:scaleX(0.8964)">DR_CAS</span><span class="vl " style="top:684px;transform:scaleX(0.9691)">St0</span>
<i class="cl" style="left:42px;top:710px;width:10px"></i><svg class="dm" style="left:50.5px;top:701.2px" width="16" height="16" viewBox="0 0 16 16"><polygon points="7.3,0.7 8.7,0.7 15.3,7.3 15.3,8.7 8.7,15.3 7.3,15.3 0.7,8.7 0.7,7.3" fill="#1a8fd6"/><polygon points="7.3,0.7 8,0.7 8,4.5 4.5,8 0.7,8 0.7,7.3" fill="#9ee6ff"/><polygon points="8,15.3 8.7,15.3 15.3,8.7 15.3,8 11.5,8 8,11.5" fill="#0a6aa6"/><polygon points="8,4.5 11.5,8 8,11.5 4.5,8" fill="#12baf2"/></svg><span class="nm " style="left:70px;top:701px;transform:scaleX(0.8985)">DR_PH2</span><span class="vl " style="top:701px;transform:scaleX(0.9691)">St0</span>
<i class="cl" style="left:42px;top:727px;width:10px"></i><svg class="dm" style="left:50.5px;top:718.2px" width="16" height="16" viewBox="0 0 16 16"><polygon points="7.3,0.7 8.7,0.7 15.3,7.3 15.3,8.7 8.7,15.3 7.3,15.3 0.7,8.7 0.7,7.3" fill="#1a8fd6"/><polygon points="7.3,0.7 8,0.7 8,4.5 4.5,8 0.7,8 0.7,7.3" fill="#9ee6ff"/><polygon points="8,15.3 8.7,15.3 15.3,8.7 15.3,8 11.5,8 8,11.5" fill="#0a6aa6"/><polygon points="8,4.5 11.5,8 8,11.5 4.5,8" fill="#12baf2"/></svg><span class="nm " style="left:70px;top:718px;transform:scaleX(0.8985)">DR_PH3</span><span class="vl " style="top:718px;transform:scaleX(0.9691)">St0</span>
<i class="cl" style="left:42px;top:744px;width:10px"></i><svg class="dm" style="left:50.5px;top:735.2px" width="16" height="16" viewBox="0 0 16 16"><polygon points="7.3,0.7 8.7,0.7 15.3,7.3 15.3,8.7 8.7,15.3 7.3,15.3 0.7,8.7 0.7,7.3" fill="#1a8fd6"/><polygon points="7.3,0.7 8,0.7 8,4.5 4.5,8 0.7,8 0.7,7.3" fill="#9ee6ff"/><polygon points="8,15.3 8.7,15.3 15.3,8.7 15.3,8 11.5,8 8,11.5" fill="#0a6aa6"/><polygon points="8,4.5 11.5,8 8,11.5 4.5,8" fill="#12baf2"/></svg><span class="nm " style="left:70px;top:735px;transform:scaleX(0.8985)">DR_PH4</span><span class="vl " style="top:735px;transform:scaleX(0.9691)">St0</span>
<i class="cl" style="left:42px;top:761px;width:10px"></i><svg class="dm" style="left:50.5px;top:752.2px" width="16" height="16" viewBox="0 0 16 16"><polygon points="7.3,0.7 8.7,0.7 15.3,7.3 15.3,8.7 8.7,15.3 7.3,15.3 0.7,8.7 0.7,7.3" fill="#1a8fd6"/><polygon points="7.3,0.7 8,0.7 8,4.5 4.5,8 0.7,8 0.7,7.3" fill="#9ee6ff"/><polygon points="8,15.3 8.7,15.3 15.3,8.7 15.3,8 11.5,8 8,11.5" fill="#0a6aa6"/><polygon points="8,4.5 11.5,8 8,11.5 4.5,8" fill="#12baf2"/></svg><span class="nm " style="left:70px;top:752px;transform:scaleX(0.9162)">DR_PW6</span><span class="vl " style="top:752px;transform:scaleX(0.9691)">St0</span>
<i class="cl" style="left:42px;top:778px;width:10px"></i><svg class="dm" style="left:50.5px;top:769.2px" width="16" height="16" viewBox="0 0 16 16"><polygon points="7.3,0.7 8.7,0.7 15.3,7.3 15.3,8.7 8.7,15.3 7.3,15.3 0.7,8.7 0.7,7.3" fill="#1a8fd6"/><polygon points="7.3,0.7 8,0.7 8,4.5 4.5,8 0.7,8 0.7,7.3" fill="#9ee6ff"/><polygon points="8,15.3 8.7,15.3 15.3,8.7 15.3,8 11.5,8 8,11.5" fill="#0a6aa6"/><polygon points="8,4.5 11.5,8 8,11.5 4.5,8" fill="#12baf2"/></svg><span class="nm " style="left:70px;top:769px;transform:scaleX(0.9066)">nDR_RAS</span><span class="vl " style="top:769px;transform:scaleX(0.9691)">St1</span>
<i class="cl" style="left:42px;top:795px;width:10px"></i><svg class="dm" style="left:50.5px;top:786.2px" width="16" height="16" viewBox="0 0 16 16"><polygon points="7.3,0.7 8.7,0.7 15.3,7.3 15.3,8.7 8.7,15.3 7.3,15.3 0.7,8.7 0.7,7.3" fill="#1a8fd6"/><polygon points="7.3,0.7 8,0.7 8,4.5 4.5,8 0.7,8 0.7,7.3" fill="#9ee6ff"/><polygon points="8,15.3 8.7,15.3 15.3,8.7 15.3,8 11.5,8 8,11.5" fill="#0a6aa6"/><polygon points="8,4.5 11.5,8 8,11.5 4.5,8" fill="#12baf2"/></svg><span class="nm " style="left:70px;top:786px;transform:scaleX(0.9066)">nDR_CAS</span><span class="vl " style="top:786px;transform:scaleX(0.9691)">St1</span>
<i class="cl" style="left:42px;top:812px;width:10px"></i><svg class="dm" style="left:50.5px;top:803.2px" width="16" height="16" viewBox="0 0 16 16"><polygon points="7.3,0.7 8.7,0.7 15.3,7.3 15.3,8.7 8.7,15.3 7.3,15.3 0.7,8.7 0.7,7.3" fill="#1a8fd6"/><polygon points="7.3,0.7 8,0.7 8,4.5 4.5,8 0.7,8 0.7,7.3" fill="#9ee6ff"/><polygon points="8,15.3 8.7,15.3 15.3,8.7 15.3,8 11.5,8 8,11.5" fill="#0a6aa6"/><polygon points="8,4.5 11.5,8 8,11.5 4.5,8" fill="#12baf2"/></svg><span class="nm " style="left:70px;top:803px;transform:scaleX(0.9087)">nDR_PH2</span><span class="vl " style="top:803px;transform:scaleX(0.9691)">St1</span>
<i class="cl" style="left:42px;top:829px;width:10px"></i><svg class="dm" style="left:50.5px;top:820.2px" width="16" height="16" viewBox="0 0 16 16"><polygon points="7.3,0.7 8.7,0.7 15.3,7.3 15.3,8.7 8.7,15.3 7.3,15.3 0.7,8.7 0.7,7.3" fill="#1a8fd6"/><polygon points="7.3,0.7 8,0.7 8,4.5 4.5,8 0.7,8 0.7,7.3" fill="#9ee6ff"/><polygon points="8,15.3 8.7,15.3 15.3,8.7 15.3,8 11.5,8 8,11.5" fill="#0a6aa6"/><polygon points="8,4.5 11.5,8 8,11.5 4.5,8" fill="#12baf2"/></svg><span class="nm " style="left:70px;top:820px;transform:scaleX(0.9087)">nDR_PH3</span><span class="vl " style="top:820px;transform:scaleX(0.9691)">St1</span>
<i class="cl" style="left:42px;top:846px;width:10px"></i><svg class="dm" style="left:50.5px;top:837.2px" width="16" height="16" viewBox="0 0 16 16"><polygon points="7.3,0.7 8.7,0.7 15.3,7.3 15.3,8.7 8.7,15.3 7.3,15.3 0.7,8.7 0.7,7.3" fill="#1a8fd6"/><polygon points="7.3,0.7 8,0.7 8,4.5 4.5,8 0.7,8 0.7,7.3" fill="#9ee6ff"/><polygon points="8,15.3 8.7,15.3 15.3,8.7 15.3,8 11.5,8 8,11.5" fill="#0a6aa6"/><polygon points="8,4.5 11.5,8 8,11.5 4.5,8" fill="#12baf2"/></svg><span class="nm " style="left:70px;top:837px;transform:scaleX(0.9087)">nDR_PH4</span><span class="vl " style="top:837px;transform:scaleX(0.9691)">St1</span>
<i class="cl" style="left:42px;top:863px;width:10px"></i><svg class="dm" style="left:50.5px;top:854.2px" width="16" height="16" viewBox="0 0 16 16"><polygon points="7.3,0.7 8.7,0.7 15.3,7.3 15.3,8.7 8.7,15.3 7.3,15.3 0.7,8.7 0.7,7.3" fill="#1a8fd6"/><polygon points="7.3,0.7 8,0.7 8,4.5 4.5,8 0.7,8 0.7,7.3" fill="#9ee6ff"/><polygon points="8,15.3 8.7,15.3 15.3,8.7 15.3,8 11.5,8 8,11.5" fill="#0a6aa6"/><polygon points="8,4.5 11.5,8 8,11.5 4.5,8" fill="#12baf2"/></svg><span class="nm " style="left:70px;top:854px;transform:scaleX(0.9238)">nDR_PW5</span><span class="vl " style="top:854px;transform:scaleX(0.9691)">St1</span>
<svg class="dm" style="left:32.5px;top:871.2px" width="16" height="16" viewBox="0 0 16 16"><polygon points="7.3,0.7 8.7,0.7 15.3,7.3 15.3,8.7 8.7,15.3 7.3,15.3 0.7,8.7 0.7,7.3" fill="#1a8fd6"/><polygon points="7.3,0.7 8,0.7 8,4.5 4.5,8 0.7,8 0.7,7.3" fill="#9ee6ff"/><polygon points="8,15.3 8.7,15.3 15.3,8.7 15.3,8 11.5,8 8,11.5" fill="#0a6aa6"/><polygon points="8,4.5 11.5,8 8,11.5 4.5,8" fill="#12baf2"/></svg><span class="nm " style="left:52px;top:871px;transform:scaleX(0.929)">WORDW</span><span class="vl " style="top:871px;transform:scaleX(0.9691)">St0</span>
<svg class="dm" style="left:32.5px;top:888.2px" width="16" height="16" viewBox="0 0 16 16"><polygon points="7.3,0.7 8.7,0.7 15.3,7.3 15.3,8.7 8.7,15.3 7.3,15.3 0.7,8.7 0.7,7.3" fill="#1a8fd6"/><polygon points="7.3,0.7 8,0.7 8,4.5 4.5,8 0.7,8 0.7,7.3" fill="#9ee6ff"/><polygon points="8,15.3 8.7,15.3 15.3,8.7 15.3,8 11.5,8 8,11.5" fill="#0a6aa6"/><polygon points="8,4.5 11.5,8 8,11.5 4.5,8" fill="#12baf2"/></svg><span class="nm " style="left:52px;top:888px;transform:scaleX(0.8855)">nWBYTEF</span><span class="vl " style="top:888px;transform:scaleX(0.9691)">St1</span>
<svg class="dm" style="left:32.5px;top:905.2px" width="16" height="16" viewBox="0 0 16 16"><polygon points="7.3,0.7 8.7,0.7 15.3,7.3 15.3,8.7 8.7,15.3 7.3,15.3 0.7,8.7 0.7,7.3" fill="#1a8fd6"/><polygon points="7.3,0.7 8,0.7 8,4.5 4.5,8 0.7,8 0.7,7.3" fill="#9ee6ff"/><polygon points="8,15.3 8.7,15.3 15.3,8.7 15.3,8 11.5,8 8,11.5" fill="#0a6aa6"/><polygon points="8,4.5 11.5,8 8,11.5 4.5,8" fill="#12baf2"/></svg><span class="nm " style="left:52px;top:905px;transform:scaleX(0.9113)">nWDONE</span><span class="vl " style="top:905px;transform:scaleX(0.9691)">St1</span>
<svg class="dm" style="left:32.5px;top:922.2px" width="16" height="16" viewBox="0 0 16 16"><polygon points="7.3,0.7 8.7,0.7 15.3,7.3 15.3,8.7 8.7,15.3 7.3,15.3 0.7,8.7 0.7,7.3" fill="#1a8fd6"/><polygon points="7.3,0.7 8,0.7 8,4.5 4.5,8 0.7,8 0.7,7.3" fill="#9ee6ff"/><polygon points="8,15.3 8.7,15.3 15.3,8.7 15.3,8 11.5,8 8,11.5" fill="#0a6aa6"/><polygon points="8,4.5 11.5,8 8,11.5 4.5,8" fill="#12baf2"/></svg><span class="nm " style="left:52px;top:922px;transform:scaleX(0.9092)">nWTBTF</span><span class="vl " style="top:922px;transform:scaleX(0.9691)">St1</span>
<svg class="dm" style="left:32.5px;top:939.2px" width="16" height="16" viewBox="0 0 16 16"><polygon points="7.3,0.7 8.7,0.7 15.3,7.3 15.3,8.7 8.7,15.3 7.3,15.3 0.7,8.7 0.7,7.3" fill="#1a8fd6"/><polygon points="7.3,0.7 8,0.7 8,4.5 4.5,8 0.7,8 0.7,7.3" fill="#9ee6ff"/><polygon points="8,15.3 8.7,15.3 15.3,8.7 15.3,8 11.5,8 8,11.5" fill="#0a6aa6"/><polygon points="8,4.5 11.5,8 8,11.5 4.5,8" fill="#12baf2"/></svg><span class="nm " style="left:52px;top:939px;transform:scaleX(0.9121)">nWTBT</span><span class="vl " style="top:939px;transform:scaleX(0.9691)">St1</span>
<i class="cv" style="left:41px;top:615px;height:249px"></i>
</div>
<!-- insertion pointer -->
<i style="left:16px;top:956px;width:119px;height:1px;background:#000"></i>
<i style="left:144px;top:956px;width:59px;height:1px;background:#000"></i>
<svg class="abs" style="left:14px;top:952px" width="6" height="9" viewBox="0 0 6 9"><polygon points="1.5,1 4.5,4.5 1.5,8" fill="none" stroke="#000" stroke-width="0.8"/></svg>

<svg class="wave" width="1920" height="1000" viewBox="0 0 1920 1000" shape-rendering="crispEdges"><rect x="210" y="14" width="1685" height="986" fill="#000"/>
<rect x="210" y="34" width="1685" height="2" fill="#fff"/>
<path d="M269.5 36V1000M358.5 36V1000M448.5 36V1000M537.5 36V1000M627.5 36V1000M716.5 36V1000M806.5 36V1000M895.5 36V1000M985.5 36V1000M1074.5 36V1000M1164.5 36V1000M1253.5 36V1000M1343.5 36V1000M1432.5 36V1000M1522.5 36V1000M1611.5 36V1000M1701.5 36V1000M1790.5 36V1000M1880.5 36V1000" stroke="#808080" stroke-width="1" fill="none"/>
<path d="M211 40.5H215.5V52.5H233.5V40.5H251.5V52.5H269.5V40.5H287.5V52.5H305.5V40.5H323.5V52.5H341.5V40.5H359.5V52.5H376.5V40.5H394.5V52.5H412.5V40.5H430.5V52.5H448.5V40.5H466.5V52.5H484.5V40.5H502.5V52.5H520.5V40.5H538.5V52.5H555.5V40.5H573.5V52.5H591.5V40.5H609.5V52.5H627.5V40.5H645.5V52.5H663.5V40.5H681.5V52.5H699.5V40.5H717.5V52.5H734.5V40.5H752.5V52.5H770.5V40.5H788.5V52.5H806.5V40.5H824.5V52.5H842.5V40.5H860.5V52.5H878.5V40.5H896.5V52.5H913.5V40.5H931.5V52.5H949.5V40.5H967.5V52.5H985.5V40.5H1003.5V52.5H1021.5V40.5H1039.5V52.5H1057.5V40.5H1075.5V52.5H1092.5V40.5H1110.5V52.5H1128.5V40.5H1146.5V52.5H1164.5V40.5H1182.5V52.5H1200.5V40.5H1218.5V52.5H1236.5V40.5H1254.5V52.5H1271.5V40.5H1289.5V52.5H1307.5V40.5H1325.5V52.5H1343.5V40.5H1361.5V52.5H1379.5V40.5H1397.5V52.5H1415.5V40.5H1433.5V52.5H1450.5V40.5H1468.5V52.5H1486.5V40.5H1504.5V52.5H1522.5V40.5H1540.5V52.5H1558.5V40.5H1576.5V52.5H1594.5V40.5H1612.5V52.5H1629.5V40.5H1647.5V52.5H1665.5V40.5H1683.5V52.5H1701.5V40.5H1719.5V52.5H1737.5V40.5H1755.5V52.5H1773.5V40.5H1790.5V52.5H1808.5V40.5H1826.5V52.5H1844.5V40.5H1862.5V52.5H1880.5V40.5H1894M211 69.5H1894M211 86.5H340.5V74.5H1894M211 108.5H372.5V120.5H434.5V108.5H1625.5V120.5H1688.5V108.5H1804.5V120.5H1867.5V108.5H1894M211 137.5H291.5V125.5H381.5V137.5H480.5V125.5H560.5V137.5H685.5V125.5H775.5V137.5H864.5V125.5H1204.5V137.5H1294.5V125.5H1634.5V137.5H1733.5V125.5H1813.5V137.5H1894M211 154.5H296.5V142.5H402.5V154.5H485.5V142.5H581.5V154.5H690.5V142.5H796.5V154.5H869.5V142.5H1226.5V154.5H1299.5V142.5H1656.5V154.5H1738.5V142.5H1835.5V154.5H1894M211 171.5H300.5V159.5H385.5V171.5H485.5V159.5H564.5V171.5H693.5V159.5H779.5V171.5H1140.5V159.5H1209.5V171.5H1570.5V159.5H1638.5V171.5H1738.5V159.5H1817.5V171.5H1894M211 176.5H434.5V188.5H470.5V176.5H1688.5V188.5H1723.5V176.5H1867.5V188.5H1894M211 193.5H224.5V205.5H291.5V193.5H618.5V205.5H685.5V193.5H833.5V205.5H864.5V193.5H1262.5V205.5H1294.5V193.5H1894M211 222.5H291.5V210.5H551.5V222.5H613.5V210.5H766.5V222.5H864.5V210.5H1195.5V222.5H1294.5V210.5H1894M211 227.5H1894M277.5 245V256.5H299.5M459.5 245V256.5H476.5M673.5 245V256.5H692.5M842.5 245V256.5H1139.5M1271.5 245V256.5H1568.5M1712.5 245V256.5H1729.5M1891.5 245V256.5H1894M441.5 262V273.5H459.5M1694.5 262V273.5H1712.5M1873.5 262V273.5H1891.5M211 278.5H384.5V290.5H459.5V278.5H635.5V290.5H696.5V278.5H886.5V290.5H961.5V278.5H1029.5V290.5H1104.5V278.5H1315.5V290.5H1390.5V278.5H1459.5V290.5H1533.5V278.5H1638.5V290.5H1712.5V278.5H1817.5V290.5H1891.5V278.5H1894M211 295.5H1894M211 312.5H403.5V324.5H438.5V312.5H653.5V324.5H688.5V312.5H904.5V324.5H939.5V312.5H1047.5V324.5H1082.5V312.5H1334.5V324.5H1368.5V312.5H1477.5V324.5H1512.5V312.5H1656.5V324.5H1691.5V312.5H1835.5V324.5H1870.5V312.5H1894M211 329.5H624.5V341.5H692.5V329.5H1029.5V341.5H1104.5V329.5H1459.5V341.5H1533.5V329.5H1894M211 346.5H1894M211 363.5H1711.5V375.5H1736.5V363.5H1890.5V375.5H1894M211 392.5H1693.5V380.5H1736.5V392.5H1872.5V380.5H1894M211 397.5H440.5V409.5H475.5V397.5H1031.5V409.5H1106.5V397.5H1461.5V409.5H1535.5V397.5H1894M211 414.5H440.5V426.5H483.5V414.5H873.5V426.5H1145.5V414.5H1371.5V426.5H1575.5V414.5H1894M211 431.5H300.5V443.5H304.5V431.5H440.5V443.5H483.5V431.5H691.5V443.5H698.5V431.5H942.5V443.5H1145.5V431.5H1302.5V443.5H1575.5V431.5H1894M211 448.5H1894M211 465.5H1894M211 482.5H231.5V494.5H298.5V482.5H1894M211 499.5H443.5V511.5H478.5V499.5H1696.5V511.5H1731.5V499.5H1875.5V511.5H1894M211 528.5H441.5V516.5H476.5V528.5H1694.5V516.5H1729.5V528.5H1873.5V516.5H1894M211 545.5H1594.5V533.5H1894M211 562.5H1894M211 567.5H1894M211 584.5H1894M211 618.5H369.5V630.5H454.5V618.5H548.5V630.5H695.5V618.5H763.5V630.5H955.5V618.5H990.5V630.5H1098.5V618.5H1133.5V630.5H1142.5V618.5H1193.5V630.5H1385.5V618.5H1420.5V630.5H1528.5V618.5H1563.5V630.5H1571.5V618.5H1622.5V630.5H1707.5V618.5H1801.5V630.5H1886.5V618.5H1894M211 635.5H368.5V647.5H484.5V635.5H547.5V647.5H693.5V635.5H762.5V647.5H1140.5V635.5H1191.5V647.5H1570.5V635.5H1621.5V647.5H1738.5V635.5H1800.5V647.5H1894M211 652.5H370.5V664.5H454.5V652.5H549.5V664.5H695.5V652.5H763.5V664.5H955.5V652.5H990.5V664.5H1099.5V652.5H1134.5V664.5H1142.5V652.5H1193.5V664.5H1385.5V652.5H1420.5V664.5H1528.5V652.5H1563.5V664.5H1571.5V652.5H1623.5V664.5H1707.5V652.5H1802.5V664.5H1886.5V652.5H1894M211 681.5H380.5V669.5H455.5V681.5H631.5V669.5H696.5V681.5H881.5V669.5H956.5V681.5H1025.5V669.5H1100.5V681.5H1311.5V669.5H1386.5V681.5H1454.5V669.5H1529.5V681.5H1633.5V669.5H1708.5V681.5H1812.5V669.5H1887.5V681.5H1894M211 698.5H398.5V686.5H455.5V698.5H649.5V686.5H696.5V698.5H900.5V686.5H956.5V698.5H1043.5V686.5H1100.5V698.5H1329.5V686.5H1386.5V698.5H1472.5V686.5H1529.5V698.5H1651.5V686.5H1708.5V698.5H1830.5V686.5H1887.5V698.5H1894M211 715.5H416.5V703.5H455.5V715.5H667.5V703.5H696.5V715.5H917.5V703.5H956.5V715.5H1060.5V703.5H1100.5V715.5H1347.5V703.5H1386.5V715.5H1490.5V703.5H1529.5V715.5H1669.5V703.5H1708.5V715.5H1848.5V703.5H1887.5V715.5H1894M211 732.5H434.5V720.5H455.5V732.5H685.5V720.5H696.5V732.5H935.5V720.5H956.5V732.5H1079.5V720.5H1100.5V732.5H1365.5V720.5H1386.5V732.5H1508.5V720.5H1529.5V732.5H1687.5V720.5H1708.5V732.5H1866.5V720.5H1887.5V732.5H1894M211 749.5H452.5V737.5H487.5V749.5H954.5V737.5H989.5V749.5H1097.5V737.5H1132.5V749.5H1383.5V737.5H1418.5V749.5H1526.5V737.5H1561.5V749.5H1705.5V737.5H1740.5V749.5H1884.5V737.5H1894M211 766.5H973.5V754.5H1140.5V766.5H1403.5V754.5H1570.5V766.5H1894M211 771.5H379.5V783.5H456.5V771.5H630.5V783.5H697.5V771.5H881.5V783.5H957.5V771.5H1024.5V783.5H1100.5V771.5H1310.5V783.5H1387.5V771.5H1453.5V783.5H1530.5V771.5H1632.5V783.5H1709.5V771.5H1811.5V783.5H1888.5V771.5H1894M211 788.5H397.5V800.5H456.5V788.5H648.5V800.5H697.5V788.5H899.5V800.5H957.5V788.5H1042.5V800.5H1100.5V788.5H1328.5V800.5H1387.5V788.5H1471.5V800.5H1530.5V788.5H1650.5V800.5H1709.5V788.5H1829.5V800.5H1888.5V788.5H1894M211 805.5H415.5V817.5H456.5V805.5H666.5V817.5H697.5V805.5H916.5V817.5H957.5V805.5H1060.5V817.5H1100.5V805.5H1346.5V817.5H1387.5V805.5H1489.5V817.5H1530.5V805.5H1668.5V817.5H1709.5V805.5H1847.5V817.5H1888.5V805.5H1894M211 822.5H433.5V834.5H456.5V822.5H684.5V834.5H697.5V822.5H934.5V834.5H957.5V822.5H1078.5V834.5H1100.5V822.5H1364.5V834.5H1387.5V822.5H1507.5V834.5H1530.5V822.5H1686.5V834.5H1709.5V822.5H1865.5V834.5H1888.5V822.5H1894M211 839.5H451.5V851.5H488.5V839.5H952.5V851.5H989.5V839.5H1095.5V851.5H1132.5V839.5H1382.5V851.5H1419.5V839.5H1525.5V851.5H1562.5V839.5H1704.5V851.5H1741.5V839.5H1883.5V851.5H1894M211 856.5H970.5V868.5H1007.5V856.5H1113.5V868.5H1141.5V856.5H1400.5V868.5H1437.5V856.5H1543.5V868.5H1571.5V856.5H1894M211 885.5H620.5V873.5H687.5V885.5H1894M211 890.5H836.5V902.5H1106.5V890.5H1266.5V902.5H1536.5V890.5H1894M211 907.5H691.5V919.5H694.5V907.5H1103.5V919.5H1141.5V907.5H1533.5V919.5H1571.5V907.5H1894M211 924.5H294.5V936.5H300.5V924.5H867.5V936.5H1140.5V924.5H1296.5V936.5H1569.5V924.5H1894M211 953.5H293.5V941.5H552.5V953.5H615.5V941.5H767.5V953.5H866.5V941.5H1197.5V953.5H1295.5V941.5H1894" stroke="#00ff00" stroke-width="1" fill="none" stroke-linejoin="miter"/>
<path d="M211 244.5H214M217 244.5H220M223 244.5H226M229 244.5H232M235 244.5H238M241 244.5H244M247 244.5H250M253 244.5H256M259 244.5H262M265 244.5H268M271 244.5H274M299.5 248V251M299.5 254V257M300 244.5H303M306 244.5H309M312 244.5H315M318 244.5H321M324 244.5H327M330 244.5H333M336 244.5H339M342 244.5H345M348 244.5H351M354 244.5H357M360 244.5H363M366 244.5H369M372 244.5H375M378 244.5H381M384 244.5H387M390 244.5H393M396 244.5H399M402 244.5H405M408 244.5H411M414 244.5H417M420 244.5H423M426 244.5H429M432 244.5H435M438 244.5H441M444 244.5H447M450 244.5H453M456 244.5H458.5M476.5 248V251M476.5 254V257M477 244.5H480M483 244.5H486M489 244.5H492M495 244.5H498M501 244.5H504M507 244.5H510M513 244.5H516M519 244.5H522M525 244.5H528M531 244.5H534M537 244.5H540M543 244.5H546M549 244.5H552M555 244.5H558M561 244.5H564M567 244.5H570M573 244.5H576M579 244.5H582M585 244.5H588M591 244.5H594M597 244.5H600M603 244.5H606M609 244.5H612M615 244.5H618M621 244.5H624M627 244.5H630M633 244.5H636M639 244.5H642M645 244.5H648M651 244.5H654M657 244.5H660M663 244.5H666M669 244.5H672M692.5 248V251M692.5 254V257M693 244.5H696M699 244.5H702M705 244.5H708M711 244.5H714M717 244.5H720M723 244.5H726M729 244.5H732M735 244.5H738M741 244.5H744M747 244.5H750M753 244.5H756M759 244.5H762M765 244.5H768M771 244.5H774M777 244.5H780M783 244.5H786M789 244.5H792M795 244.5H798M801 244.5H804M807 244.5H810M813 244.5H816M819 244.5H822M825 244.5H828M831 244.5H834M837 244.5H840M1139.5 248V251M1139.5 254V257M1140 244.5H1143M1146 244.5H1149M1152 244.5H1155M1158 244.5H1161M1164 244.5H1167M1170 244.5H1173M1176 244.5H1179M1182 244.5H1185M1188 244.5H1191M1194 244.5H1197M1200 244.5H1203M1206 244.5H1209M1212 244.5H1215M1218 244.5H1221M1224 244.5H1227M1230 244.5H1233M1236 244.5H1239M1242 244.5H1245M1248 244.5H1251M1254 244.5H1257M1260 244.5H1263M1266 244.5H1269M1568.5 248V251M1568.5 254V257M1569 244.5H1572M1575 244.5H1578M1581 244.5H1584M1587 244.5H1590M1593 244.5H1596M1599 244.5H1602M1605 244.5H1608M1611 244.5H1614M1617 244.5H1620M1623 244.5H1626M1629 244.5H1632M1635 244.5H1638M1641 244.5H1644M1647 244.5H1650M1653 244.5H1656M1659 244.5H1662M1665 244.5H1668M1671 244.5H1674M1677 244.5H1680M1683 244.5H1686M1689 244.5H1692M1695 244.5H1698M1701 244.5H1704M1707 244.5H1710M1729.5 248V251M1729.5 254V257M1730 244.5H1733M1736 244.5H1739M1742 244.5H1745M1748 244.5H1751M1754 244.5H1757M1760 244.5H1763M1766 244.5H1769M1772 244.5H1775M1778 244.5H1781M1784 244.5H1787M1790 244.5H1793M1796 244.5H1799M1802 244.5H1805M1808 244.5H1811M1814 244.5H1817M1820 244.5H1823M1826 244.5H1829M1832 244.5H1835M1838 244.5H1841M1844 244.5H1847M1850 244.5H1853M1856 244.5H1859M1862 244.5H1865M1868 244.5H1871M1874 244.5H1877M1880 244.5H1883M1886 244.5H1889M211 261.5H214M217 261.5H220M223 261.5H226M229 261.5H232M235 261.5H238M241 261.5H244M247 261.5H250M253 261.5H256M259 261.5H262M265 261.5H268M271 261.5H274M277 261.5H280M283 261.5H286M289 261.5H292M295 261.5H298M301 261.5H304M307 261.5H310M313 261.5H316M319 261.5H322M325 261.5H328M331 261.5H334M337 261.5H340M343 261.5H346M349 261.5H352M355 261.5H358M361 261.5H364M367 261.5H370M373 261.5H376M379 261.5H382M385 261.5H388M391 261.5H394M397 261.5H400M403 261.5H406M409 261.5H412M415 261.5H418M421 261.5H424M427 261.5H430M433 261.5H436M439 261.5H440.5M459.5 265V268M459.5 271V274M460 261.5H463M466 261.5H469M472 261.5H475M478 261.5H481M484 261.5H487M490 261.5H493M496 261.5H499M502 261.5H505M508 261.5H511M514 261.5H517M520 261.5H523M526 261.5H529M532 261.5H535M538 261.5H541M544 261.5H547M550 261.5H553M556 261.5H559M562 261.5H565M568 261.5H571M574 261.5H577M580 261.5H583M586 261.5H589M592 261.5H595M598 261.5H601M604 261.5H607M610 261.5H613M616 261.5H619M622 261.5H625M628 261.5H631M634 261.5H637M640 261.5H643M646 261.5H649M652 261.5H655M658 261.5H661M664 261.5H667M670 261.5H673M676 261.5H679M682 261.5H685M688 261.5H691M694 261.5H697M700 261.5H703M706 261.5H709M712 261.5H715M718 261.5H721M724 261.5H727M730 261.5H733M736 261.5H739M742 261.5H745M748 261.5H751M754 261.5H757M760 261.5H763M766 261.5H769M772 261.5H775M778 261.5H781M784 261.5H787M790 261.5H793M796 261.5H799M802 261.5H805M808 261.5H811M814 261.5H817M820 261.5H823M826 261.5H829M832 261.5H835M838 261.5H841M844 261.5H847M850 261.5H853M856 261.5H859M862 261.5H865M868 261.5H871M874 261.5H877M880 261.5H883M886 261.5H889M892 261.5H895M898 261.5H901M904 261.5H907M910 261.5H913M916 261.5H919M922 261.5H925M928 261.5H931M934 261.5H937M940 261.5H943M946 261.5H949M952 261.5H955M958 261.5H961M964 261.5H967M970 261.5H973M976 261.5H979M982 261.5H985M988 261.5H991M994 261.5H997M1000 261.5H1003M1006 261.5H1009M1012 261.5H1015M1018 261.5H1021M1024 261.5H1027M1030 261.5H1033M1036 261.5H1039M1042 261.5H1045M1048 261.5H1051M1054 261.5H1057M1060 261.5H1063M1066 261.5H1069M1072 261.5H1075M1078 261.5H1081M1084 261.5H1087M1090 261.5H1093M1096 261.5H1099M1102 261.5H1105M1108 261.5H1111M1114 261.5H1117M1120 261.5H1123M1126 261.5H1129M1132 261.5H1135M1138 261.5H1141M1144 261.5H1147M1150 261.5H1153M1156 261.5H1159M1162 261.5H1165M1168 261.5H1171M1174 261.5H1177M1180 261.5H1183M1186 261.5H1189M1192 261.5H1195M1198 261.5H1201M1204 261.5H1207M1210 261.5H1213M1216 261.5H1219M1222 261.5H1225M1228 261.5H1231M1234 261.5H1237M1240 261.5H1243M1246 261.5H1249M1252 261.5H1255M1258 261.5H1261M1264 261.5H1267M1270 261.5H1273M1276 261.5H1279M1282 261.5H1285M1288 261.5H1291M1294 261.5H1297M1300 261.5H1303M1306 261.5H1309M1312 261.5H1315M1318 261.5H1321M1324 261.5H1327M1330 261.5H1333M1336 261.5H1339M1342 261.5H1345M1348 261.5H1351M1354 261.5H1357M1360 261.5H1363M1366 261.5H1369M1372 261.5H1375M1378 261.5H1381M1384 261.5H1387M1390 261.5H1393M1396 261.5H1399M1402 261.5H1405M1408 261.5H1411M1414 261.5H1417M1420 261.5H1423M1426 261.5H1429M1432 261.5H1435M1438 261.5H1441M1444 261.5H1447M1450 261.5H1453M1456 261.5H1459M1462 261.5H1465M1468 261.5H1471M1474 261.5H1477M1480 261.5H1483M1486 261.5H1489M1492 261.5H1495M1498 261.5H1501M1504 261.5H1507M1510 261.5H1513M1516 261.5H1519M1522 261.5H1525M1528 261.5H1531M1534 261.5H1537M1540 261.5H1543M1546 261.5H1549M1552 261.5H1555M1558 261.5H1561M1564 261.5H1567M1570 261.5H1573M1576 261.5H1579M1582 261.5H1585M1588 261.5H1591M1594 261.5H1597M1600 261.5H1603M1606 261.5H1609M1612 261.5H1615M1618 261.5H1621M1624 261.5H1627M1630 261.5H1633M1636 261.5H1639M1642 261.5H1645M1648 261.5H1651M1654 261.5H1657M1660 261.5H1663M1666 261.5H1669M1672 261.5H1675M1678 261.5H1681M1684 261.5H1687M1690 261.5H1693M1712.5 265V268M1712.5 271V274M1713 261.5H1716M1719 261.5H1722M1725 261.5H1728M1731 261.5H1734M1737 261.5H1740M1743 261.5H1746M1749 261.5H1752M1755 261.5H1758M1761 261.5H1764M1767 261.5H1770M1773 261.5H1776M1779 261.5H1782M1785 261.5H1788M1791 261.5H1794M1797 261.5H1800M1803 261.5H1806M1809 261.5H1812M1815 261.5H1818M1821 261.5H1824M1827 261.5H1830M1833 261.5H1836M1839 261.5H1842M1845 261.5H1848M1851 261.5H1854M1857 261.5H1860M1863 261.5H1866M1869 261.5H1872M1891.5 265V268M1891.5 271V274" stroke="#ffffff" stroke-width="1" fill="none"/>
<path d="M210 91h10v1h-10zM210 103h10v1h-10zM219 92h1v2h-1zM219 101h1v2h-1zM221 92h1v2h-1zM221 101h1v2h-1zM220 94h1v7h-1zM221 91h141v1h-141zM221 103h141v1h-141zM361 92h1v2h-1zM361 101h1v2h-1zM363 92h1v2h-1zM363 101h1v2h-1zM362 94h1v7h-1zM363 91h71v1h-71zM363 103h71v1h-71zM433 92h1v2h-1zM433 101h1v2h-1zM435 92h1v2h-1zM435 101h1v2h-1zM434 94h1v7h-1zM435 91h106v1h-106zM435 103h106v1h-106zM540 92h1v2h-1zM540 101h1v2h-1zM542 92h1v2h-1zM542 101h1v2h-1zM541 94h1v7h-1zM542 91h71v1h-71zM542 103h71v1h-71zM612 92h1v2h-1zM612 101h1v2h-1zM614 92h1v2h-1zM614 101h1v2h-1zM613 94h1v7h-1zM614 91h143v1h-143zM614 103h143v1h-143zM756 92h1v2h-1zM756 101h1v2h-1zM758 92h1v2h-1zM758 101h1v2h-1zM757 94h1v7h-1zM758 91h70v1h-70zM758 103h70v1h-70zM827 92h1v2h-1zM827 101h1v2h-1zM829 92h1v2h-1zM829 101h1v2h-1zM828 94h1v7h-1zM829 91h357v1h-357zM829 103h357v1h-357zM1185 92h1v2h-1zM1185 101h1v2h-1zM1187 92h1v2h-1zM1187 101h1v2h-1zM1186 94h1v7h-1zM1187 91h71v1h-71zM1187 103h71v1h-71zM1257 92h1v2h-1zM1257 101h1v2h-1zM1259 92h1v2h-1zM1259 101h1v2h-1zM1258 94h1v7h-1zM1259 91h357v1h-357zM1259 103h357v1h-357zM1615 92h1v2h-1zM1615 101h1v2h-1zM1617 92h1v2h-1zM1617 101h1v2h-1zM1616 94h1v7h-1zM1617 91h71v1h-71zM1617 103h71v1h-71zM1687 92h1v2h-1zM1687 101h1v2h-1zM1689 92h1v2h-1zM1689 101h1v2h-1zM1688 94h1v7h-1zM1689 91h106v1h-106zM1689 103h106v1h-106zM1794 92h1v2h-1zM1794 101h1v2h-1zM1796 92h1v2h-1zM1796 101h1v2h-1zM1795 94h1v7h-1zM1796 91h71v1h-71zM1796 103h71v1h-71zM1866 92h1v2h-1zM1866 101h1v2h-1zM1868 92h1v2h-1zM1868 101h1v2h-1zM1867 94h1v7h-1zM1868 91h26v1h-26zM1868 103h26v1h-26z" fill="#b4ffb4" stroke="none"/>
<text x="221.4" y="102" class="bt">17777777</text>
<text x="363.4" y="102" class="bt">00000000</text>
<text x="435.4" y="102" class="bt">17777777</text>
<text x="542.4" y="102" class="bt">00000000</text>
<text x="614.4" y="102" class="bt">17777777</text>
<text x="758.4" y="102" class="bt">00000000</text>
<text x="829.4" y="102" class="bt">17777777</text>
<text x="1187.4" y="102" class="bt">00000001</text>
<text x="1259.4" y="102" class="bt">17777777</text>
<text x="1617.4" y="102" class="bt">00000000</text>
<text x="1689.4" y="102" class="bt">17777777</text>
<text x="1796.4" y="102" class="bt">00000000</text>
<text x="1868.4" y="102" class="bt" style="letter-spacing:1px">1...</text>
<text x="214" y="612" class="bt" style="letter-spacing:0.2px">( DRAM )</text></svg>

<!-- tooltip -->
<div class="tip"><span style="top:4px">sim:/tb_119/S1 @ 7858190 ps</span><span style="top:18.8px">St0</span></div>

<!-- right scrollbar -->
<i style="left:1895px;top:14px;width:3px;height:986px;background:#fff"></i>
<i style="left:1895px;top:14px;width:1px;height:986px;background:#b0b0b0"></i>
<i style="left:1898px;top:15px;width:17px;height:19px;background:#808080"></i>
<i style="left:1898px;top:36px;width:1px;height:964px;background:#808080"></i>
<i style="left:1899px;top:36px;width:16px;height:964px;background:#fff"></i>
<i style="left:1900px;top:37px;width:12px;height:963px;background:#f0f0f0"></i>
<i style="left:1912px;top:36px;width:2px;height:964px;background:#909090"></i>
<i style="left:1899px;top:51px;width:15px;height:2px;background:#909090"></i>
<i style="left:1899px;top:53px;width:13px;height:1px;background:#fff"></i>
<i style="left:1899px;top:997px;width:15px;height:2px;background:#909090"></i>
<i style="left:1899px;top:999px;width:13px;height:1px;background:#fff"></i>
<i style="left:1900px;top:368px;width:12px;height:16px;background:#fff"></i>
<svg class="abs" style="left:1902px;top:42px" width="9" height="6" viewBox="0 0 9 6"><polygon points="0.5,5 4.5,1 8.5,5" fill="#000"/></svg>
<i style="left:1917.5px;top:0;width:1.2px;height:1000px;background:#a0a0a0"></i><i style="left:1895px;top:14px;width:20px;height:1px;background:#696969"></i><i style="left:1898px;top:33px;width:17px;height:1px;background:#707070"></i>
<i style="left:1919px;top:0;width:1px;height:1000px;background:#f8f8f8"></i>
</body></html>
